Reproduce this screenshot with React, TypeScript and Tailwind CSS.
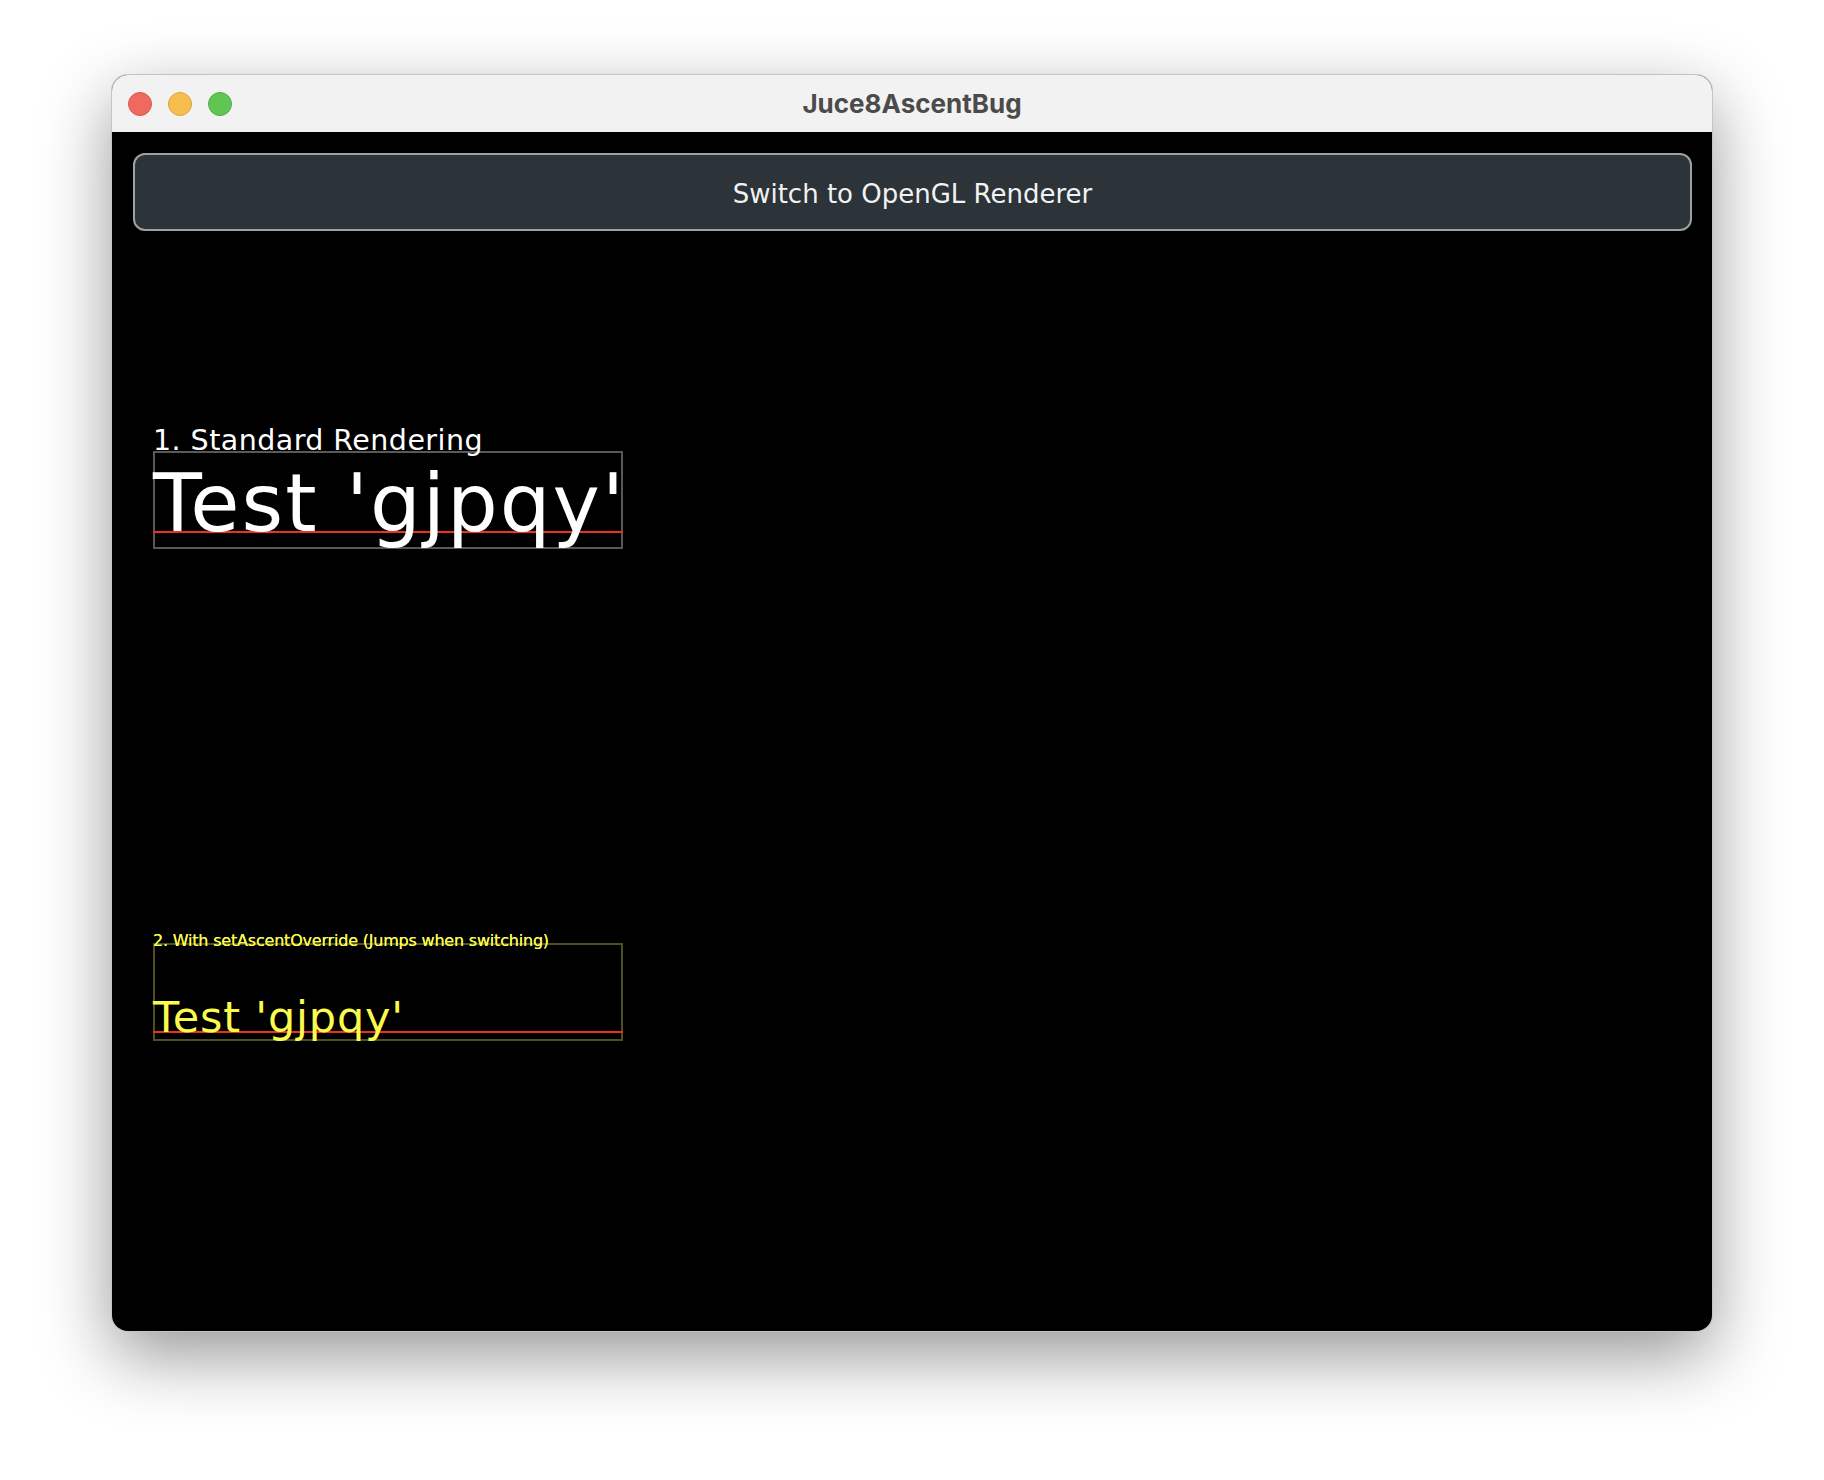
import React from 'react';

const sans = { fontFamily: '"DejaVu Sans", "Liberation Sans", sans-serif' };

const TrafficLights = () => (
  <div className="flex items-center gap-4 pl-4">
    <span className="h-6 w-6 rounded-full border border-[#d9574c] bg-[#ee6a5f]" />
    <span className="h-6 w-6 rounded-full border border-[#dca63e] bg-[#f5be4f]" />
    <span className="h-6 w-6 rounded-full border border-[#52ab47] bg-[#61c554]" />
  </div>
);

const App: React.FC = () => {
  return (
    <div className="min-h-[1480px] w-full bg-white pl-[112px] pt-[75px]">
      <div className="flex h-[1256px] w-[1600px] flex-col overflow-hidden rounded-[16px] bg-black shadow-[0_24px_70px_rgba(0,0,0,0.42)] ring-1 ring-[#c4c4c4]">
        {/* title bar */}
        <div className="grid h-[57px] shrink-0 grid-cols-[1fr_auto_1fr] items-center bg-[#f2f2f2]">
          <TrafficLights />
          <div className="font-['Inter',sans-serif] text-[26px] font-bold leading-none text-[#4b4b4b]">Juce8AscentBug</div>
          <div />
        </div>

        {/* content */}
        <div className="flex flex-1 flex-col px-[21px] pt-[21px]" style={sans}>
          <button className="flex h-[78px] w-[1559px] items-center justify-center rounded-[12px] border-2 border-[#9ca1a4] bg-[#2c3339] pt-[3px] text-[26px] leading-none text-[#f2f2f2]">
            Switch to OpenGL Renderer
          </button>

          {/* 1. standard */}
          <div className="ml-[20px] mt-[193px] flex w-[470px] flex-col">
            <div className="relative z-10 h-[34px] whitespace-nowrap text-[28.5px] leading-[34px] tracking-[0.45px] text-white">1. Standard Rendering</div>
            <div className="relative -mt-[7px] h-[98px] border-2 border-[#595959] pt-[11px]">
              <div className="absolute -left-[2px] -right-[2px] top-[78px] h-[2px] bg-[#f0301f]" />
              <div className="relative -ml-[2px] whitespace-nowrap text-[80px] leading-none tracking-[2px] text-white">Test 'gjpqy'</div>
            </div>
          </div>

          {/* 2. ascent override */}
          <div className="ml-[20px] mt-[382px] flex w-[470px] flex-col">
            <div className="relative z-10 h-[20px] whitespace-nowrap text-[16px] leading-[20px] tracking-[-0.2px] text-[#fbfb4c] [text-shadow:0_0_0.4px_#fbfb4c]">
              2. With setAscentOverride (Jumps when switching)
            </div>
            <div className="relative -mt-[8px] h-[98px] border-2 border-[#4f4f22] pt-[51px]">
              <div className="absolute -left-[2px] -right-[2px] top-[86px] h-[2px] bg-[#f0301f]" />
              <div className="relative -ml-[2px] whitespace-nowrap text-[43px] leading-none tracking-[0.8px] text-[#fbfb4c]">Test 'gjpqy'</div>
            </div>
          </div>
        </div>
      </div>
    </div>
  );
};

export default App;
